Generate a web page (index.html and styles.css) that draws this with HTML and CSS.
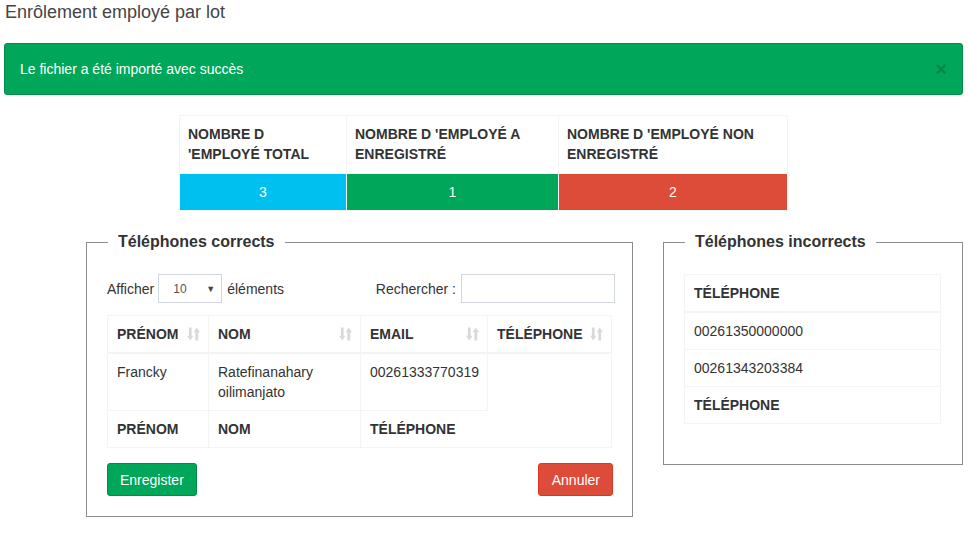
FILE: index.html
```html
<!DOCTYPE html>
<html lang="fr">
<head>
<meta charset="utf-8">
<title>Enrôlement employé par lot</title>
<link rel="stylesheet" href="styles.css">
</head>
<body>
<div class="page">
  <h1 class="title">Enrôlement employé par lot</h1>

  <div class="alert">
    <span>Le fichier a été importé avec succès</span>
    <button class="alert-close" type="button">×</button>
  </div>

  <table class="stats">
    <tr>
      <th class="c1">NOMBRE D 'EMPLOYÉ TOTAL</th>
      <th class="c2">NOMBRE D 'EMPLOYÉ A ENREGISTRÉ</th>
      <th class="c3">NOMBRE D 'EMPLOYÉ NON ENREGISTRÉ</th>
    </tr>
    <tr>
      <td class="bg-aqua">3</td>
      <td class="bg-green">1</td>
      <td class="bg-red">2</td>
    </tr>
  </table>

  <div class="panels">
    <fieldset class="box box-correct">
      <legend>Téléphones corrects</legend>
      <div class="controls">
        <label class="length">Afficher
          <span class="select"><span>10</span><span class="caret">▼</span></span>
          éléments</label>
        <label class="search">Rechercher : <span class="input"></span></label>
      </div>
      <table class="grid grid-main">
        <thead>
          <tr>
            <th class="w1">PRÉNOM<svg class="sort" viewBox="0 0 14 16"><path d="M2 1h3v9h2l-3.5 5L0 10h2z M9 15h3V6h2l-3.5-5L7 6h2z"/></svg></th>
            <th class="w2">NOM<svg class="sort" viewBox="0 0 14 16"><path d="M2 1h3v9h2l-3.5 5L0 10h2z M9 15h3V6h2l-3.5-5L7 6h2z"/></svg></th>
            <th class="w3">EMAIL<svg class="sort" viewBox="0 0 14 16"><path d="M2 1h3v9h2l-3.5 5L0 10h2z M9 15h3V6h2l-3.5-5L7 6h2z"/></svg></th>
            <th class="w4">TÉLÉPHONE<svg class="sort" viewBox="0 0 14 16"><path d="M2 1h3v9h2l-3.5 5L0 10h2z M9 15h3V6h2l-3.5-5L7 6h2z"/></svg></th>
          </tr>
        </thead>
        <tbody>
          <tr>
            <td>Francky</td>
            <td>Ratefinanahary oilimanjato</td>
            <td>00261333770319</td>
            <td class="empty"></td>
          </tr>
        </tbody>
        <tfoot>
          <tr>
            <th>PRÉNOM</th>
            <th>NOM</th>
            <th colspan="2">TÉLÉPHONE</th>
          </tr>
        </tfoot>
      </table>
      <div class="actions">
        <button class="btn btn-green" type="button">Enregister</button>
        <button class="btn btn-red" type="button">Annuler</button>
      </div>
    </fieldset>

    <fieldset class="box box-wrong">
      <legend>Téléphones incorrects</legend>
      <table class="grid grid-side">
        <thead><tr><th>TÉLÉPHONE</th></tr></thead>
        <tbody>
          <tr><td>00261350000000</td></tr>
          <tr><td>00261343203384</td></tr>
        </tbody>
        <tfoot><tr><th>TÉLÉPHONE</th></tr></tfoot>
      </table>
    </fieldset>
  </div>
</div>
</body>
</html>
```

FILE: styles.css
```css
* { box-sizing: border-box; }

body {
  margin: 0;
  background: #fff;
  font-family: "Liberation Sans", Arial, sans-serif;
  font-size: 14px;
  line-height: 20px;
  color: #333;
}

.page {
  padding: 0 6px 20px 4px;
}

.title {
  margin: 0;
  padding: 1px 0 0 1px;
  font-size: 18px;
  line-height: 22px;
  font-weight: normal;
  color: #444;
}

.alert {
  margin-top: 20px;
  display: flex;
  align-items: center;
  justify-content: space-between;
  padding: 15px;
  background: #00a65a;
  border: 1px solid #008d4c;
  border-radius: 3px;
  color: #fff;
  height: 52px;
}

.alert-close {
  background: none;
  border: 0;
  padding: 0;
  font-family: "Liberation Sans", Arial, sans-serif;
  font-size: 20px;
  font-weight: bold;
  line-height: 20px;
  color: rgba(0, 0, 0, 0.2);
}

.stats {
  margin: 20px 0 0 175px;
  border-collapse: collapse;
  width: 608px;
  table-layout: fixed;
}

.stats th,
.stats td {
  border: 1px solid #f4f4f4;
  padding: 8px;
}

.stats th {
  text-align: left;
  font-weight: bold;
  color: #333;
  vertical-align: top;
  height: 58px;
}

.stats .c1 { width: 167px; }
.stats .c2 { width: 212px; }
.stats .c3 { width: 229px; }

.stats td {
  height: 37px;
  color: #fff;
  text-align: center;
}

.bg-aqua { background: #00c0ef; }
.bg-green { background: #00a65a; }
.bg-red { background: #dd4b39; border-radius: 0 0 3px 0; }

.panels {
  display: flex;
  align-items: flex-start;
  margin-top: 20px;
  padding-left: 82px;
}

.box {
  margin: 0;
  border: 1px solid #8c8c8c;
  padding: 21px 20px 20px 20px;
  min-width: 0;
  flex: none;
}

.box legend {
  margin-left: 1px;
  padding: 0 10px;
  font-size: 16px;
  font-weight: bold;
  line-height: 22px;
  color: #333;
}

.box-correct {
  width: 547px;
  padding-right: 17px;
}

.box-wrong {
  width: 300px;
  margin-left: 30px;
  padding-bottom: 40px;
}

.controls {
  display: flex;
  justify-content: space-between;
  align-items: center;
  height: 29px;
  margin-bottom: 12px;
}

.controls label {
  display: flex;
  align-items: center;
  color: #333;
}

.select {
  display: inline-flex;
  align-items: center;
  justify-content: space-between;
  width: 64px;
  height: 29px;
  margin: 0 5px 0 4px;
  padding: 0 6px 0 14px;
  border: 1px solid #d2d6de;
  font-size: 12px;
  color: #555;
}

.caret {
  font-size: 9px;
  color: #444;
}

.input {
  display: inline-block;
  width: 154px;
  height: 29px;
  margin-left: 5px;
  border: 1px solid #d2d6de;
}

.grid {
  border-collapse: collapse;
  border: 1px solid #f4f4f4;
  table-layout: fixed;
}

.grid th,
.grid td {
  border: 1px solid #f4f4f4;
  padding: 8px 9px;
  text-align: left;
  vertical-align: top;
  line-height: 20px;
}

.grid th {
  font-weight: bold;
  color: #333;
}

.grid thead th {
  border-bottom-width: 2px;
}

.grid td.empty {
  border-bottom-style: hidden;
}

.grid-main {
  width: 504px;
}

.grid-main thead th {
  position: relative;
  padding-right: 30px;
}

.grid-main .w1 { width: 101px; }
.grid-main .w2 { width: 152px; }
.grid-main .w3 { width: 127px; }
.grid-main .w4 { width: 124px; }

.sort {
  position: absolute;
  right: 8px;
  top: 10px;
  width: 13px;
  height: 16px;
  fill: #d9d9d9;
}

.actions {
  display: flex;
  justify-content: space-between;
  margin-top: 15px;
}

.btn {
  height: 33px;
  padding: 0 12px;
  border: 1px solid transparent;
  border-radius: 3px;
  font-family: "Liberation Sans", Arial, sans-serif;
  font-size: 14px;
  line-height: 20px;
  color: #fff;
}

.btn-green {
  background: #00a65a;
  border-color: #008d4c;
}

.btn-red {
  background: #dd4b39;
  border-color: #d73925;
  padding-left: 13px;
  margin-right: 2px;
}

.grid-side {
  width: 257px;
}
```
